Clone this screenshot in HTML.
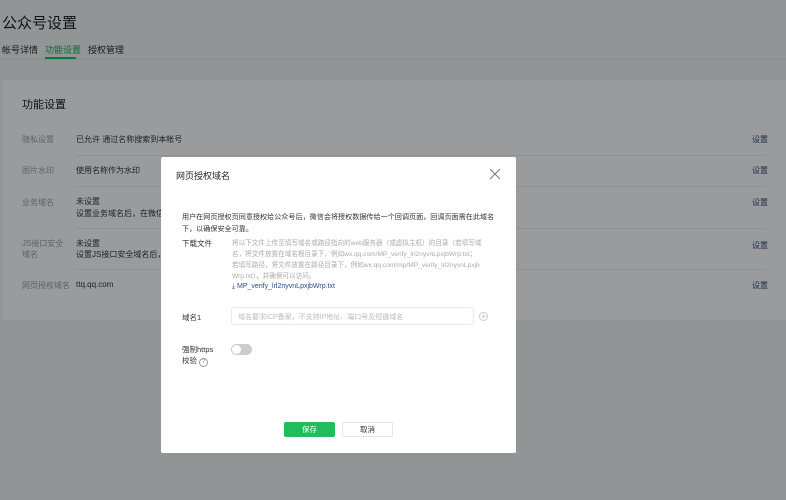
<!DOCTYPE html>
<html><head><meta charset="utf-8"><style>
*{margin:0;padding:0;box-sizing:border-box}
body{width:786px;height:500px;overflow:hidden;background:#929596;font-family:"Liberation Sans","Noto Sans CJK SC",sans-serif;position:relative;color:#1a1a1a}
.a{position:absolute;white-space:nowrap}
.card{position:absolute;left:2px;top:80px;width:784px;height:240px;background:#999b9c}
.line{position:absolute;height:1px;background:#8e9091}
.lb{color:#5e6162;font-size:8px}
.v{color:#222;font-size:8px}
.s{color:#1d2a48;font-size:8px}
.modal{position:absolute;left:161px;top:157px;width:355px;height:296px;background:#fff;border-radius:2px}
.m{position:absolute;white-space:nowrap}
</style></head><body>
<div class="a" style="left:2px;top:12px;font-size:15px;color:#111">公众号设置</div>
<div class="a" style="left:2px;top:43px;font-size:9px;color:#1a1a1a">帐号详情</div>
<div class="a" style="left:45px;top:43px;font-size:9px;color:#0b6b33">功能设置</div>
<div class="a" style="left:45px;top:57px;width:31px;height:2px;background:#0f7a3a"></div>
<div class="a" style="left:88px;top:43px;font-size:9px;color:#1a1a1a">授权管理</div>
<div class="line" style="left:0;top:59px;width:786px;background:#8a8d8e"></div>
<div class="card"></div>
<div class="a" style="left:22px;top:96px;font-size:11px;color:#111">功能设置</div>
<div class="a lb" style="left:22px;top:134px">隐私设置</div><div class="a v" style="left:76px;top:134px">已允许 通过名称搜索到本帐号</div>
<div class="line" style="left:76px;top:155px;width:690px"></div>
<div class="a lb" style="left:22px;top:165px">图片水印</div><div class="a v" style="left:76px;top:165px">使用名称作为水印</div>
<div class="line" style="left:76px;top:186px;width:690px"></div>
<div class="a lb" style="left:22px;top:197px">业务域名</div><div class="a v" style="left:76px;top:196px">未设置</div><div class="a v" style="left:76px;top:208px">设置业务域名后，在微信内</div>
<div class="line" style="left:76px;top:228px;width:690px"></div>
<div class="a lb" style="left:22px;top:238px;line-height:11px;white-space:normal;width:44px">JS接口安全域名</div><div class="a v" style="left:76px;top:238px">未设置</div><div class="a v" style="left:76px;top:249px">设置JS接口安全域名后，公</div>
<div class="line" style="left:76px;top:269px;width:690px"></div>
<div class="a lb" style="left:22px;top:280px">网页授权域名</div><div class="a v" style="left:76px;top:280px">ttq.qq.com</div>
<div class="a s" style="left:752px;top:134px">设置</div><div class="a s" style="left:752px;top:165px">设置</div><div class="a s" style="left:752px;top:197px">设置</div><div class="a s" style="left:752px;top:240px">设置</div><div class="a s" style="left:752px;top:280px">设置</div>
<div class="modal">
<div class="m" style="left:15px;top:12px;font-size:9px;color:#222">网页授权域名</div>
<svg class="m" style="left:328px;top:11px" width="12" height="12" viewBox="0 0 12 12"><path d="M1 1L11 11M11 1L1 11" stroke="#777" stroke-width="1"/></svg>
<div class="m" style="left:21px;top:54px;font-size:7.1px;color:#333;line-height:12px">用户在网页授权页同意授权给公众号后，微信会将授权数据传给一个回调页面，回调页面需在此域名<br>下，以确保安全可靠。</div>
<div class="m" style="left:21px;top:81px;font-size:7.5px;color:#333">下载文件</div>
<div class="m" style="left:71px;top:81px;font-size:6.6px;color:#aaa;line-height:11px">将以下文件上传至填写域名或路径指向的web服务器（或虚拟主机）的目录（若填写域<br>名，将文件放置在域名根目录下，例如wx.qq.com/MP_verify_lrl2nyvnLpxjbWrp.txt；<br>若填写路径，将文件放置在路径目录下，例如wx.qq.com/mp/MP_verify_lrl2nyvnLpxjb<br>Wrp.txt），并确保可以访问。</div>
<div class="m" style="left:71px;top:126px;font-size:7px;color:#2a4a8a">⤓ MP_verify_lrl2nyvnLpxjbWrp.txt</div>
<div class="m" style="left:21px;top:155px;font-size:7.5px;color:#333">域名1</div>
<div class="m" style="left:70px;top:150px;width:243px;height:18px;border:1px solid #e8e8e8;border-radius:3px;font-size:7px;color:#bbb;padding:4px 6px">域名要求ICP备案，不支持IP地址、端口号及短链域名</div>
<div class="m" style="left:318px;top:155px;width:9px;height:9px;border:1px solid #ccc;border-radius:50%;font-size:8px;line-height:7px;text-align:center;color:#bbb">+</div>
<div class="m" style="left:21px;top:187px;font-size:7.5px;color:#333;line-height:11px">强制https<br>校验 <span style="display:inline-block;width:9px;height:9px;border:1px solid #999;border-radius:50%;font-size:6px;line-height:7px;text-align:center;color:#888">?</span></div>
<div class="m" style="left:70px;top:187px;width:21px;height:11px;border-radius:6px;background:#ccc"><div style="position:absolute;left:1px;top:1px;width:9px;height:9px;border-radius:50%;background:#fff"></div></div>
<div class="m" style="left:123px;top:265px;width:51px;height:15px;background:#1fbe5a;border-radius:2px;color:#fff;font-size:7.5px;text-align:center;line-height:15px">保存</div>
<div class="m" style="left:181px;top:265px;width:51px;height:15px;border:1px solid #e5e5e5;border-radius:2px;color:#333;font-size:7.5px;text-align:center;line-height:13px">取消</div>
</div>
</body></html>
